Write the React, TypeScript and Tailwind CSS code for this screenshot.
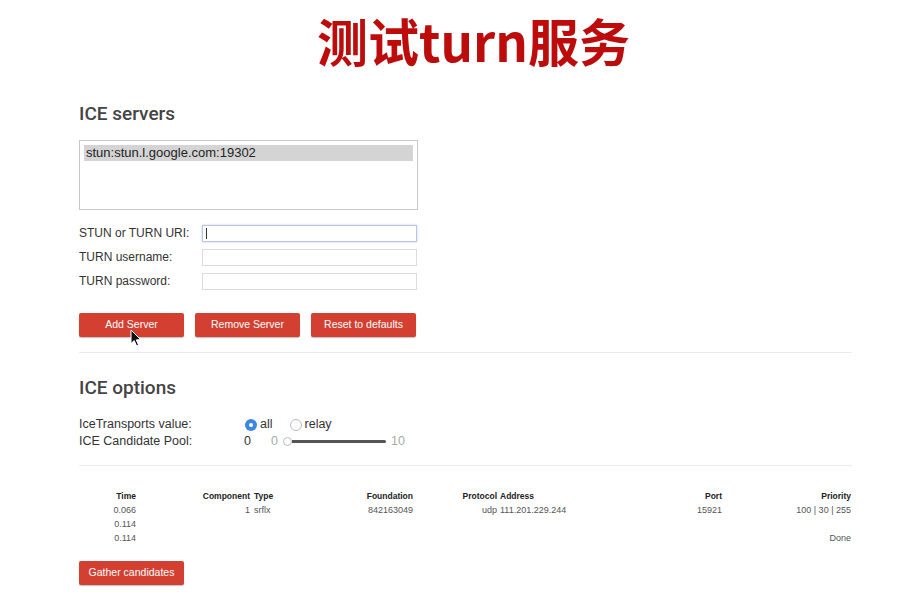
import { useState } from "react";

const servers = ["stun:stun.l.google.com:19302"];

// header cells, each with its alignment
const columns = [
  { label: "Time", cls: "text-right" },
  { label: "Component", cls: "text-right" },
  { label: "Type", cls: "pl-[4px] text-left" },
  { label: "Foundation", cls: "text-right" },
  { label: "Protocol", cls: "text-right" },
  { label: "Address", cls: "pl-[3px] text-left" },
  { label: "Port", cls: "text-right" },
  { label: "Priority", cls: "text-right" },
];

const rows = [
  ["0.066", "1", "srflx", "842163049", "udp", "111.201.229.244", "15921", "100 | 30 | 255"],
  ["0.114", "", "", "", "", "", "", ""],
  ["0.114", "", "", "", "", "", "", "Done"],
];

function RedButton({ label, children }: { label: string; children?: React.ReactNode }) {
  return (
    <button
      type="button"
      className="relative h-[24px] w-[105px] rounded-[2px] bg-[#d33f31] text-[10.5px] text-white shadow-[0_1px_1px_rgba(0,0,0,0.25)]"
    >
      {label}
      {children}
    </button>
  );
}

function Pointer() {
  return (
    <svg
      className="absolute left-[51px] top-[16px]"
      width="12"
      height="18"
      viewBox="0 0 12 18"
      aria-hidden="true"
    >
      <path
        d="M1 1 L1 14.5 L4.2 11.6 L6.6 17 L8.6 16.1 L6.3 10.9 L10.6 10.6 Z"
        fill="#111"
        stroke="#fff"
        strokeWidth="1"
        strokeLinejoin="round"
      />
    </svg>
  );
}

function Field({ label, focused }: { label: string; focused?: boolean }) {
  return (
    <div className="flex h-[24px] items-center">
      <span className="w-[123px] text-[12px] text-[#333]">{label}</span>
      <div
        className={
          focused
            ? "flex h-[17px] w-[215px] items-center border border-[#b9c6e6] bg-white px-[3px] shadow-[0_0_2px_rgba(120,150,220,0.5)]"
            : "h-[17px] w-[215px] border border-[#dcdcdc] bg-white"
        }
      >
        {focused ? <span className="h-[11px] w-px bg-[#333]" /> : null}
      </div>
    </div>
  );
}

function Radio({ checked }: { checked: boolean }) {
  return checked ? (
    <span className="flex h-[12px] w-[12px] items-center justify-center rounded-full bg-[#3b86e8]">
      <span className="h-[4px] w-[4px] rounded-full bg-white" />
    </span>
  ) : (
    <span className="h-[12px] w-[12px] rounded-full border border-[#bbb] bg-white" />
  );
}

export default function App() {
  const [transport, setTransport] = useState("all");

  return (
    <div
      className="min-h-[608px] w-[911px] bg-white text-[#333]"
      style={{ fontFamily: '"Liberation Sans", Arial, sans-serif' }}
    >
      <h1
        className="pl-[36px] pt-[11px] text-center text-[51px] font-bold leading-[58px] text-[#bd0c0c]"
        style={{ fontFamily: '"Noto Sans CJK SC", "Noto Sans", sans-serif' }}
      >
        测试turn服务
      </h1>

      <div className="ml-[79px] w-[773px]">
        {/* ICE servers */}
        <h2
          className="mt-[33px] text-[19px] font-medium leading-[24px] text-[#444]"
          style={{ fontFamily: "Roboto, sans-serif" }}
        >
          ICE servers
        </h2>

        <div className="mt-[14px] h-[70px] w-[339px] border border-[#c8c8c8] p-[4px]">
          {servers.map((s) => (
            <div key={s} className="h-[16px] bg-[#d4d4d4] px-[2px] text-[13px] leading-[16px] text-[#222]">
              {s}
            </div>
          ))}
        </div>

        <div className="mt-[11px] flex flex-col">
          <Field label="STUN or TURN URI:" focused />
          <Field label="TURN username:" />
          <Field label="TURN password:" />
        </div>

        <div className="mt-[20px] flex gap-[11px]">
          <RedButton label="Add Server">
            <Pointer />
          </RedButton>
          <RedButton label="Remove Server" />
          <RedButton label="Reset to defaults" />
        </div>

        <div className="mt-[15px] h-px bg-[#ececec]" />

        {/* ICE options */}
        <h2
          className="mt-[23px] text-[19px] font-medium leading-[24px] text-[#444]"
          style={{ fontFamily: "Roboto, sans-serif" }}
        >
          ICE options
        </h2>

        <div className="mt-[16px] flex h-[17px] items-center text-[12.5px]">
          <span className="w-[166px]">IceTransports value:</span>
          <label className="flex items-center gap-[3px]" onClick={() => setTransport("all")}>
            <Radio checked={transport === "all"} />
            all
          </label>
          <label className="ml-[17px] flex items-center gap-[3px]" onClick={() => setTransport("relay")}>
            <Radio checked={transport === "relay"} />
            relay
          </label>
        </div>

        <div className="flex h-[17px] items-center text-[12.5px]">
          <span className="w-[165px]">ICE Candidate Pool:</span>
          <span className="w-[27px]">0</span>
          <span className="text-[#aaa]">0</span>
          <div className="ml-[5px] flex w-[103px] items-center">
            <span className="h-[9px] w-[9px] shrink-0 rounded-full border border-[#bbb] bg-white" />
            <span className="h-[3px] flex-1 rounded-r-full bg-[#555]" />
          </div>
          <span className="ml-[5px] text-[#aaa]">10</span>
        </div>

        <div className="mt-[15px] h-px bg-[#ececec]" />

        {/* candidates table */}
        <div className="mt-[23px] grid grid-cols-[57px_114px_70px_93px_84px_125px_100px_129px] text-[9px] leading-[14px]">
          {columns.map((c) => (
            <div key={c.label} className={`${c.cls} text-[8.5px] font-bold text-[#222]`}>
              {c.label}
            </div>
          ))}
          {rows.map((r, i) =>
            r.map((cell, j) => (
              <div key={`${i}-${j}`} className={`${columns[j].cls} text-[#555]`}>
                {cell}
              </div>
            ))
          )}
        </div>

        <div className="mt-[14px]">
          <RedButton label="Gather candidates" />
        </div>
      </div>
    </div>
  );
}
